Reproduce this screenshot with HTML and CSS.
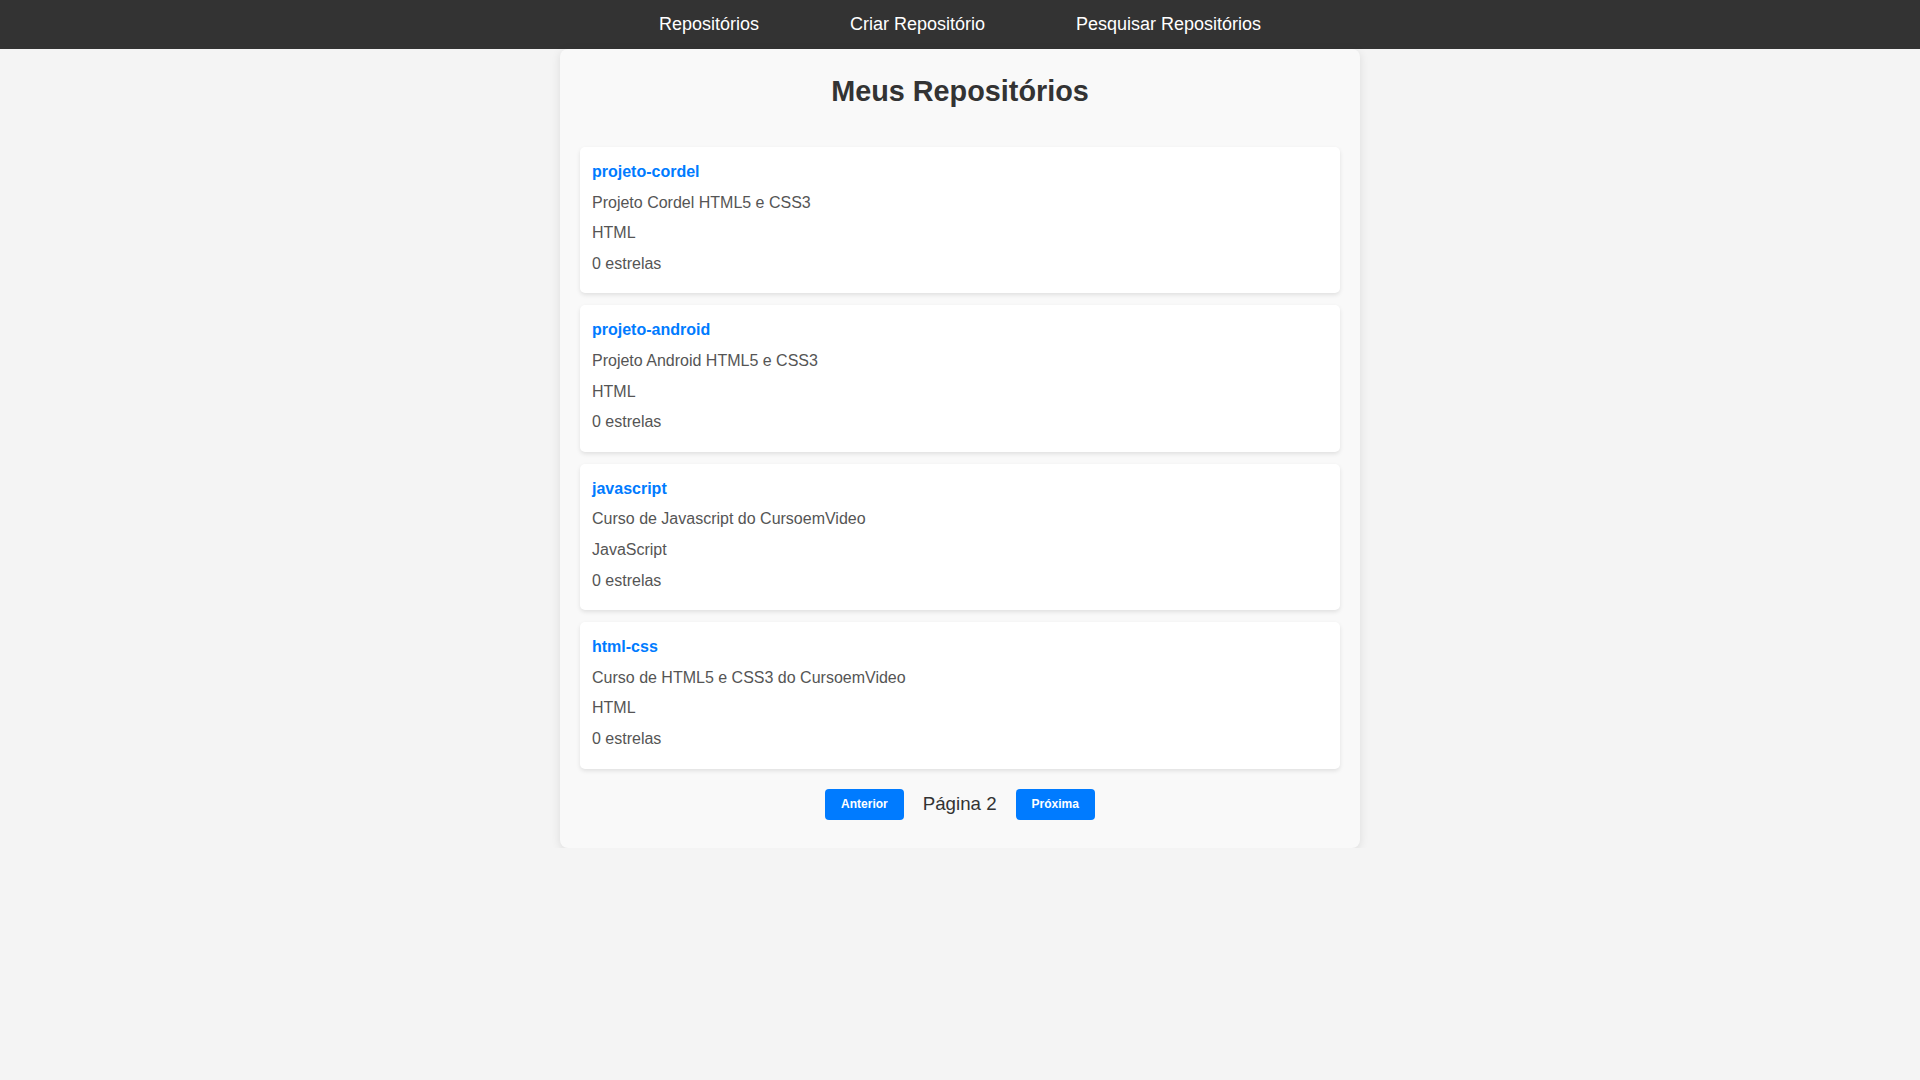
FILE: index.html
```html
<!DOCTYPE html>
<html lang="pt-BR">
<head>
<meta charset="utf-8">
<title>Meus Repositórios</title>
<link rel="stylesheet" href="styles.css">
</head>
<body>
<nav class="topnav">
  <a href="#" class="nav-link">Repositórios</a>
  <a href="#" class="nav-link">Criar Repositório</a>
  <a href="#" class="nav-link">Pesquisar Repositórios</a>
</nav>
<main class="container">
  <h1 class="page-title">Meus Repositórios</h1>
  <div class="repo-list">
    <div class="repo-card">
      <h3 class="repo-name"><a href="#">projeto-cordel</a></h3>
      <p>Projeto Cordel HTML5 e CSS3</p>
      <p>HTML</p>
      <p>0 estrelas</p>
    </div>
    <div class="repo-card">
      <h3 class="repo-name"><a href="#">projeto-android</a></h3>
      <p>Projeto Android HTML5 e CSS3</p>
      <p>HTML</p>
      <p>0 estrelas</p>
    </div>
    <div class="repo-card">
      <h3 class="repo-name"><a href="#">javascript</a></h3>
      <p>Curso de Javascript do CursoemVideo</p>
      <p>JavaScript</p>
      <p>0 estrelas</p>
    </div>
    <div class="repo-card">
      <h3 class="repo-name"><a href="#">html-css</a></h3>
      <p>Curso de HTML5 e CSS3 do CursoemVideo</p>
      <p>HTML</p>
      <p>0 estrelas</p>
    </div>
  </div>
  <div class="pagination">
    <button class="page-btn">Anterior</button>
    <span class="page-label">Página 2</span>
    <button class="page-btn">Próxima</button>
  </div>
</main>
</body>
</html>
```

FILE: styles.css
```css
* {
  box-sizing: border-box;
}

body {
  margin: 0;
  background: #f4f4f4;
  font-family: "Liberation Sans", Arial, sans-serif;
  color: #333;
}

.topnav {
  height: 49px;
  background: #333;
  display: flex;
  justify-content: center;
  align-items: center;
  gap: 91px;
}

.nav-link {
  color: #fff;
  text-decoration: none;
  font-size: 18px;
}

.container {
  width: 800px;
  margin: 0 auto;
  background: #f9f9f9;
  border-radius: 8px;
  box-shadow: 0 2px 10px rgba(0, 0, 0, 0.1);
  padding: 26px 20px 28px;
}

.page-title {
  margin: 0 0 39px;
  text-align: center;
  font-size: 28.8px;
  color: #333;
  line-height: 33px;
}

.repo-list {
  display: flex;
  flex-direction: column;
  gap: 12px;
}

.repo-card {
  background: #fff;
  border-radius: 5px;
  box-shadow: 0 2px 4px rgba(0, 0, 0, 0.1);
  padding: 12px 12px 17px;
}

.repo-name {
  margin: 0 0 5px;
  font-size: 16px;
  line-height: 25.6px;
}

.repo-name a {
  color: #007bff;
  text-decoration: none;
}

.repo-card p {
  margin: 0 0 5px;
  font-size: 16px;
  line-height: 25.6px;
  color: #555;
}

.repo-card p:last-child {
  margin-bottom: 0;
}

.pagination {
  margin-top: 20px;
  display: flex;
  justify-content: center;
  align-items: center;
  gap: 19px;
}

.page-btn {
  font-family: "Liberation Sans", Arial, sans-serif;
  font-size: 12px;
  font-weight: bold;
  line-height: 15px;
  padding: 8px 16px;
  background: #007bff;
  color: #fff;
  border: none;
  border-radius: 4px;
  cursor: pointer;
}

.page-label {
  font-size: 18.72px;
  color: #333;
}
```
